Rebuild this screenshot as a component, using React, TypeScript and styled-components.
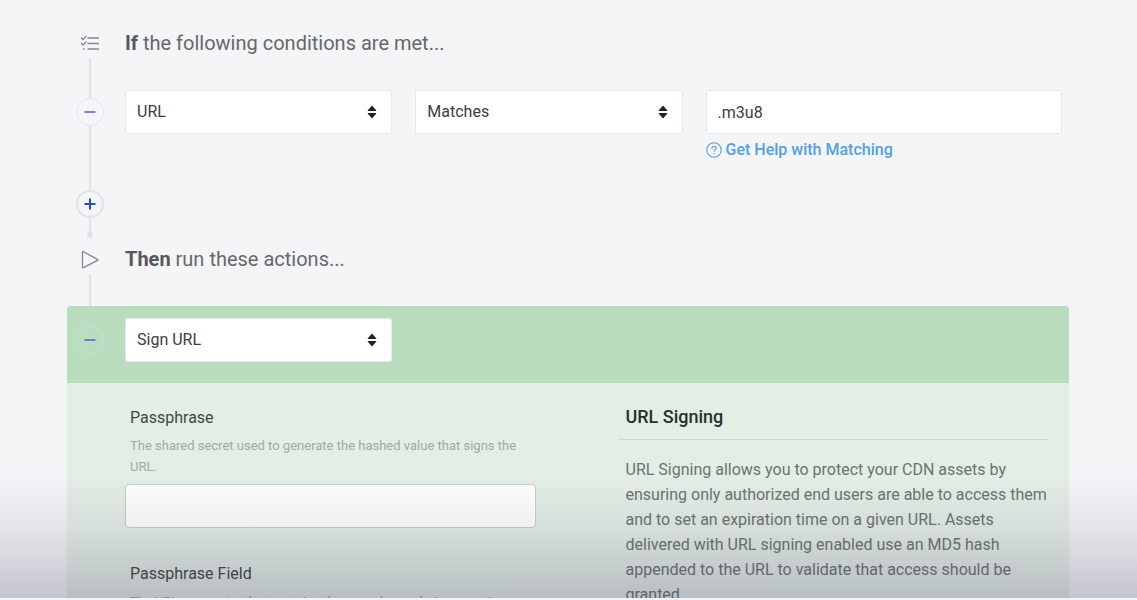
import React from "react";
import styled, { createGlobalStyle } from "styled-components";

const GlobalStyle = createGlobalStyle`
  * { box-sizing: border-box; }
  body { margin: 0; background: #f3f5f7; font-family: Roboto, "Liberation Sans", sans-serif; }
  h2, h3, p { margin: 0; }
`;

const Screen = styled.div`
  height: 100vh;
  display: flex;
  flex-direction: column;
`;

const Viewport = styled.main`
  flex: 1;
  min-height: 0;
  overflow: hidden;
  position: relative;
  background: #f3f5f7;
  border-bottom: 2px solid #f3f6f9;
  padding: 28px 68px 0 67px;
`;

const Fade = styled.div`
  position: absolute;
  left: 0;
  right: 0;
  bottom: 0;
  height: 124px;
  pointer-events: none;
  background: linear-gradient(
    rgba(60, 50, 90, 0),
    rgba(60, 50, 85, 0.08) 42%,
    rgba(60, 50, 90, 0.25)
  );
`;

const Step = styled.section<{ $inset?: number; $after?: number }>`
  display: grid;
  grid-template-columns: 46px minmax(0, 1fr);
  column-gap: 12px;
  padding-right: ${(p) => p.$inset ?? 0}px;
  margin-bottom: ${(p) => p.$after ?? 0}px;
`;

const Rail = styled.div`
  display: flex;
  flex-direction: column;
  align-items: center;
`;

const RailIcon = styled.svg`
  display: block;
  width: 20px;
  height: 30px;
  flex: none;
`;

const Line = styled.span<{ $height: number }>`
  width: 2px;
  height: ${(p) => p.$height}px;
  background: #e2e3e5;
`;

const Dot = styled.span`
  width: 6px;
  height: 6px;
  border-radius: 3px;
  background: #e0e1e4;
`;

const tones = {
  faint: { border: "1px solid #e7e8ed", background: "#f4f5f8", color: "#8580cc" },
  strong: { border: "2px solid #e2e4e3", background: "#f4f5f8", color: "#2f4db8" },
  green: { border: "1px solid #c6e1c8", background: "#b9ddc0", color: "#6c82b4" },
};

const RoundButton = styled.button<{ $tone: keyof typeof tones }>`
  width: 28px;
  height: 28px;
  flex: none;
  padding: 0;
  border-radius: 50%;
  display: grid;
  place-items: center;
  border: ${(p) => tones[p.$tone].border};
  background: ${(p) => tones[p.$tone].background};
  color: ${(p) => tones[p.$tone].color};
`;

const Title = styled.h2`
  font-size: 20px;
  line-height: 30px;
  font-weight: 400;
  color: #66686b;

  strong { font-weight: 700; color: #56585c; }
`;

const Fields = styled.div`
  display: grid;
  grid-template-columns: 3fr 3fr 4fr;
  column-gap: 23px;
`;

const Conditions = styled(Fields)`
  margin-top: 32px;
`;

const SelectWrap = styled.div`
  position: relative;

  svg {
    position: absolute;
    right: 14px;
    top: 15px;
    pointer-events: none;
  }
`;

const Select = styled.select`
  appearance: none;
  display: block;
  width: 100%;
  height: 44px;
  padding: 0 11px;
  border: 1px solid #e6e8ea;
  border-radius: 3px;
  background: #fff;
  color: #3c3d3f;
  font: 400 16px/20px Roboto, "Liberation Sans", sans-serif;
`;

const TextInput = styled.input<{ $outlined?: boolean }>`
  display: block;
  width: 100%;
  height: 44px;
  padding: 0 11px;
  border: 1px solid ${(p) => (p.$outlined ? "#c9cdcb" : "#e6e8ea")};
  border-radius: ${(p) => (p.$outlined ? 4 : 2)}px;
  background: #fff;
  color: #3c3d3f;
  font: 400 16px/20px Roboto, "Liberation Sans", sans-serif;
`;

const HelpLink = styled.a`
  display: flex;
  align-items: center;
  gap: 4px;
  margin-top: 6px;
  color: #559fe4;
  font-size: 16px;
  line-height: 20px;
  font-weight: 500;
  text-decoration: none;
`;

const Action = styled.section`
  border-radius: 4px 4px 0 0;
  background: #e3eee5;
`;

const ActionHead = styled.header`
  display: grid;
  grid-template-columns: 46px minmax(0, 1fr);
  column-gap: 12px;
  padding: 12px 7px 21px 0;
  border-radius: 4px 4px 0 0;
  background: #b9ddbe;
`;

const ActionButtonCell = styled.div`
  display: grid;
  place-items: center;
`;

const ActionBody = styled.div`
  display: grid;
  grid-template-columns: 411fr 431fr;
  column-gap: 82px;
  padding: 24px 21px 0 58px;
`;

const Field = styled.div`
  & + & { margin-top: 35px; }
`;

const Label = styled.label`
  display: block;
  padding-left: 5px;
  color: #414845;
  font-size: 16px;
  line-height: 22px;
`;

const Hint = styled.p`
  padding: 6px 5px 7px;
  color: #a0aaa4;
  font-size: 13px;
  line-height: 21px;
`;

const InfoTitle = styled.h3`
  padding: 0 8px 12px;
  border-bottom: 1px solid #cfdad3;
  color: #29312d;
  font-size: 18px;
  line-height: 20px;
  font-weight: 500;
`;

const InfoText = styled.p`
  padding: 17px 0 0 8px;
  color: #6a7470;
  font-size: 16px;
  line-height: 25px;
`;

function Mark({ plus }: { plus?: boolean }) {
  return (
    <svg width="14" height="14" viewBox="0 0 14 14" stroke="currentColor" strokeWidth="2" aria-hidden="true">
      <path d={plus ? "M1.5 7h11M7 1.5v11" : "M1.5 7h11"} />
    </svg>
  );
}

function Picker({ name, value }: { name: string; value: string }) {
  return (
    <SelectWrap>
      <Select aria-label={name} defaultValue={value}>
        <option>{value}</option>
      </Select>
      <svg width="12" height="14" viewBox="0 0 12 14" fill="#202124" aria-hidden="true">
        <path d="M6 .5 10.2 5.2Q10.6 6 9.8 6H2.2Q1.4 6 1.8 5.2ZM6 13.5 10.2 8.8Q10.6 8 9.8 8H2.2Q1.4 8 1.8 8.8Z" />
      </svg>
    </SelectWrap>
  );
}

export default function App() {
  return (
    <Screen>
      <GlobalStyle />
      <Viewport>
        <Step $inset={7} $after={6}>
          <Rail>
            <RailIcon viewBox="0 0 20 30" fill="none" stroke="#85878b" strokeWidth="1.3" strokeLinecap="round" strokeLinejoin="round" aria-hidden="true">
              <path d="M8 10h10.500M8 15.500h10.500M8 21h10.500M1.500 10l1.500 1.500 3-3M1.500 15.500l1.500 1.500 3-3M3.500 21h.8" />
            </RailIcon>
            <Line $height={40} />
            <RoundButton type="button" $tone="faint" aria-label="Remove condition"><Mark /></RoundButton>
            <Line $height={64} />
            <RoundButton type="button" $tone="strong" aria-label="Add condition"><Mark plus /></RoundButton>
            <Line $height={14} />
            <Dot />
          </Rail>
          <div>
            <Title><strong>If</strong> the following conditions are met...</Title>
            <Conditions>
              <Picker name="Condition" value="URL" />
              <Picker name="Operator" value="Matches" />
              <div>
                <TextInput aria-label="Value" defaultValue=".m3u8" />
                <HelpLink href="#matching">
                  <svg width="16" height="16" viewBox="0 0 16 16" fill="none" stroke="currentColor" strokeWidth="1.1" strokeLinecap="round" aria-hidden="true">
                    <circle cx="8" cy="8" r="7.2" />
                    <path d="M5.900 6.300c0-2.700 4.300-2.600 4.300-.2 0 1.500-2.100 1.500-2.100 3M8.100 11.300v.3" />
                  </svg>
                  Get Help with Matching
                </HelpLink>
              </div>
            </Conditions>
          </div>
        </Step>
        <Step>
          <Rail>
            <RailIcon viewBox="0 0 20 30" fill="none" stroke="#85878b" strokeWidth="1.3" strokeLinejoin="round" aria-hidden="true">
              <path d="M2.500 8.200v15q0 1 1 .5l14-7.300q.8-.5 0-1L3.500 7.700q-1-.5-1 .5Z" />
            </RailIcon>
            <Line $height={32} />
          </Rail>
          <Title><strong>Then</strong> run these actions...</Title>
        </Step>
        <Action>
          <ActionHead>
            <ActionButtonCell>
              <RoundButton type="button" $tone="green" aria-label="Remove action"><Mark /></RoundButton>
            </ActionButtonCell>
            <Fields>
              <Picker name="Action" value="Sign URL" />
            </Fields>
          </ActionHead>
          <ActionBody>
            <div>
              <Field>
                <Label htmlFor="passphrase">Passphrase</Label>
                <Hint>The shared secret used to generate the hashed value that signs the URL.</Hint>
                <TextInput id="passphrase" $outlined />
              </Field>
              <Field>
                <Label htmlFor="passphrase-field">Passphrase Field</Label>
                <Hint>The URL parameter that contains the passphrase during security</Hint>
                <TextInput id="passphrase-field" $outlined />
              </Field>
            </div>
            <div>
              <InfoTitle>URL Signing</InfoTitle>
              <InfoText>
                URL Signing allows you to protect your CDN assets by ensuring only authorized end users are able to
                access them and to set an expiration time on a given URL. Assets delivered with URL signing enabled use
                an MD5 hash appended to the URL to validate that access should be granted.
              </InfoText>
            </div>
          </ActionBody>
        </Action>
        <Fade />
      </Viewport>
    </Screen>
  );
}
